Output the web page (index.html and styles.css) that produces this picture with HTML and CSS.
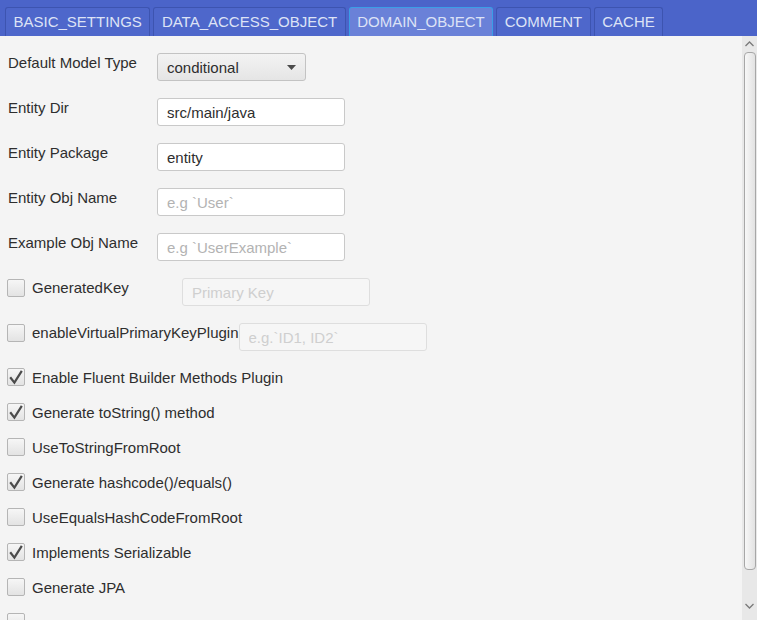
FILE: index.html
```html
<!DOCTYPE html>
<html>
<head>
<meta charset="utf-8">
<link rel="stylesheet" href="styles.css">
</head>
<body>
<div class="window">
  <div class="tabbar">
    <div class="tab">BASIC_SETTINGS</div>
    <div class="tab">DATA_ACCESS_OBJECT</div>
    <div class="tab selected">DOMAIN_OBJECT</div>
    <div class="tab">COMMENT</div>
    <div class="tab">CACHE</div>
  </div>
  <div class="pane">
    <div class="content">
      <div class="field">
        <span class="flabel">Default Model Type</span>
        <div class="combo"><span>conditional</span><svg class="arrow" width="9" height="5" viewBox="0 0 9 5"><path d="M0 0H9L4.5 5Z" fill="#4a4a4a"/></svg></div>
      </div>
      <div class="field">
        <span class="flabel">Entity Dir</span>
        <input class="text" value="src/main/java">
      </div>
      <div class="field">
        <span class="flabel">Entity Package</span>
        <input class="text" value="entity">
      </div>
      <div class="field">
        <span class="flabel">Entity Obj Name</span>
        <input class="text" placeholder="e.g `User`">
      </div>
      <div class="field">
        <span class="flabel">Example Obj Name</span>
        <input class="text" placeholder="e.g `UserExample`">
      </div>
      <div class="field">
        <span class="cb"></span>
        <span class="clabel wide">GeneratedKey</span>
        <input class="text" disabled placeholder="Primary Key">
      </div>
      <div class="field">
        <span class="cb"></span>
        <span class="clabel wide">enableVirtualPrimaryKeyPlugin</span>
        <input class="text" disabled placeholder="e.g.`ID1, ID2`">
      </div>
      <div class="checks">
        <div class="crow"><span class="cb"><svg viewBox="0 0 18 18" width="18" height="18"><path d="M3.2 9.2L7.4 14.6L14.8 2.8" fill="none" stroke="#4b4b4b" stroke-width="2.2"/></svg></span><span class="clabel">Enable Fluent Builder Methods Plugin</span></div>
        <div class="crow"><span class="cb"><svg viewBox="0 0 18 18" width="18" height="18"><path d="M3.2 9.2L7.4 14.6L14.8 2.8" fill="none" stroke="#4b4b4b" stroke-width="2.2"/></svg></span><span class="clabel">Generate toString() method</span></div>
        <div class="crow"><span class="cb"></span><span class="clabel">UseToStringFromRoot</span></div>
        <div class="crow"><span class="cb"><svg viewBox="0 0 18 18" width="18" height="18"><path d="M3.2 9.2L7.4 14.6L14.8 2.8" fill="none" stroke="#4b4b4b" stroke-width="2.2"/></svg></span><span class="clabel">Generate hashcode()/equals()</span></div>
        <div class="crow"><span class="cb"></span><span class="clabel">UseEqualsHashCodeFromRoot</span></div>
        <div class="crow"><span class="cb"><svg viewBox="0 0 18 18" width="18" height="18"><path d="M3.2 9.2L7.4 14.6L14.8 2.8" fill="none" stroke="#4b4b4b" stroke-width="2.2"/></svg></span><span class="clabel">Implements Serializable</span></div>
        <div class="crow"><span class="cb"></span><span class="clabel">Generate JPA</span></div>
        <div class="crow"><span class="cb"></span></div>
      </div>
    </div>
    <div class="scrollbar">
      <svg class="chev" width="9" height="6" viewBox="0 0 9 6"><path d="M0.5 5L4.5 1L8.5 5" fill="none" stroke="#7a7a7a" stroke-width="1.3"/></svg>
      <div class="thumb"></div>
      <svg class="chev down" width="9" height="6" viewBox="0 0 9 6"><path d="M0.5 1L4.5 5L8.5 1" fill="none" stroke="#7a7a7a" stroke-width="1.3"/></svg>
    </div>
  </div>
</div>
</body>
</html>
```

FILE: styles.css
```css
* { box-sizing: border-box; }
html, body { margin: 0; padding: 0; }
body {
  width: 757px;
  height: 620px;
  overflow: hidden;
  font-family: "Liberation Sans", Arial, sans-serif;
  font-size: 15px;
  color: #2e2e2e;
  background: #f4f4f4;
}
.window {
  width: 757px;
  height: 620px;
  display: flex;
  flex-direction: column;
}
.tabbar {
  height: 36px;
  flex: none;
  background: #4b64c9;
  display: flex;
  align-items: flex-end;
  gap: 3px;
  padding: 7px 0 0 5px;
}
.tab {
  height: 29px;
  padding: 0 7.5px;
  line-height: 28px;
  color: #dde3f6;
  font-size: 15px;
  background: #4e67cb;
  border: 1px solid #3d54b0;
  border-bottom: none;
  border-radius: 3px 3px 0 0;
  white-space: nowrap;
}
.tab.selected {
  background: #6a81d8;
  border-color: #3b9ee6;
}
.pane {
  flex: 1;
  display: flex;
  min-height: 0;
}
.content {
  flex: 1;
  overflow: hidden;
  padding: 17px 0 0 7px;
}
.field {
  display: flex;
  align-items: flex-start;
  height: 28px;
  margin-bottom: 17px;
}
.flabel {
  width: 150px;
  flex: none;
  padding: 1px 0 0 1px;
  line-height: 18px;
  white-space: nowrap;
}
.combo {
  width: 149px;
  height: 28px;
  border: 1px solid #c3c3c3;
  border-radius: 3px;
  background: linear-gradient(#f3f3f3, #e5e5e5);
  display: flex;
  align-items: center;
  justify-content: space-between;
  padding: 0 9px 0 9px;
  color: #2e2e2e;
}
.text {
  width: 188px;
  height: 28px;
  border: 1px solid #c9c9c9;
  border-radius: 3px;
  background: #ffffff;
  font-family: "Liberation Sans", Arial, sans-serif;
  font-size: 15px;
  color: #2e2e2e;
  padding: 0 9px;
  margin: 0;
  outline: none;
}
.text::placeholder { color: #b3b3b3; }
.text:disabled {
  background: #f6f6f6;
  border-color: #dedede;
}
.text:disabled::placeholder { color: #cfcfcf; }
.cb {
  width: 18px;
  height: 18px;
  flex: none;
  margin-top: 1px;
  border: 1px solid #b5b5b5;
  border-radius: 2px;
  background: linear-gradient(#f6f6f6, #e3e3e3);
  position: relative;
}
.cb svg {
  position: absolute;
  left: -1px;
  top: -1px;
}
.clabel {
  margin-left: 7px;
  line-height: 20px;
  white-space: nowrap;
}
.clabel.wide { min-width: 150px; }
.checks {
  display: flex;
  flex-direction: column;
  gap: 17px;
  margin-top: 1px;
}
.crow {
  display: flex;
  align-items: center;
  height: 18px;
}
.crow .cb { margin-top: 0; }
.crow .clabel { line-height: 18px; padding-top: 1px; }
.scrollbar {
  width: 15px;
  flex: none;
  background: #e8e8e8;
  display: flex;
  flex-direction: column;
  align-items: center;
  padding-top: 5px;
}
.chev { flex: none; }
.thumb {
  margin-top: 5px;
  width: 12px;
  height: 518px;
  border: 1px solid #a7a7a7;
  border-radius: 4px;
  background: linear-gradient(90deg, #f7f7f7, #e2e2e2);
}
.chev.down { margin-top: 33px; }
```
